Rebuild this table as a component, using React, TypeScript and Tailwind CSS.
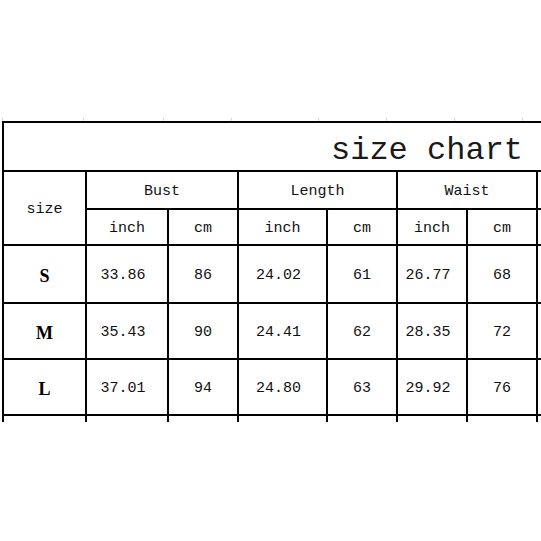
import React from "react";

const cols = "grid-cols-[81px_80px_68px_87px_68px_68px_68px_1fr]";

const rows = [
  { size: "S", vals: ["33.86", "86", "24.02", "61", "26.77", "68"] },
  { size: "M", vals: ["35.43", "90", "24.41", "62", "28.35", "72"] },
  { size: "L", vals: ["37.01", "94", "24.80", "63", "29.92", "76"] },
];

const mono = "font-['Liberation_Mono',monospace] text-[15px] text-[#111] pt-[4px]";

export default function App() {
  return (
    <div className="w-[541px] h-[541px] bg-white overflow-hidden">
      {/* faint spreadsheet gridlines above the table */}
      <div className={`mt-[118px] ml-[2px] h-[3px] grid ${cols}`}>
        {Array.from({ length: 8 }).map((_, i) => (
          <div key={i} className="border-l border-[#d6d6d6]" />
        ))}
      </div>

      <div className={`ml-[2px] grid ${cols} gap-[2px] bg-black pt-[2px] pl-[2px]`}>
        {/* title row */}
        <div className="col-span-8 h-[47px] bg-white flex items-center pl-[327px] pt-[8px]">
          <span className="font-['Liberation_Mono',monospace] text-[32px] leading-none text-[#1a1a1a]">
            size chart
          </span>
        </div>

        {/* header rows */}
        <div className={`row-span-2 bg-white flex items-center justify-center ${mono}`}>size</div>
        <div className={`col-span-2 h-[36px] bg-white flex items-center justify-center ${mono}`}>Bust</div>
        <div className={`col-span-2 bg-white flex items-center justify-center ${mono}`}>Length</div>
        <div className={`col-span-2 bg-white flex items-center justify-center ${mono}`}>Waist</div>
        <div className="bg-white" />
        {["inch", "cm", "inch", "cm", "inch", "cm"].map((t, i) => (
          <div key={i} className={`h-[34px] bg-white flex items-center justify-center ${mono}`}>
            {t}
          </div>
        ))}
        <div className="bg-white" />

        {/* data rows */}
        {rows.map((r, ri) => (
          <React.Fragment key={r.size}>
            <div
              className={`${ri === 0 ? "h-[56px]" : "h-[54px]"} bg-white flex items-center justify-center pt-[4px] font-['Liberation_Serif',serif] font-bold text-[18px] text-black`}
            >
              {r.size}
            </div>
            {r.vals.map((v, vi) => (
              <div
                key={vi}
                className={`bg-white flex items-center justify-center ${vi % 2 === 0 ? "pr-2" : ""} ${mono}`}
              >
                {v}
              </div>
            ))}
            <div className="bg-white" />
          </React.Fragment>
        ))}

        {/* cut-off next row */}
        {Array.from({ length: 8 }).map((_, i) => (
          <div key={i} className="h-[6px] bg-white" />
        ))}
      </div>
    </div>
  );
}
